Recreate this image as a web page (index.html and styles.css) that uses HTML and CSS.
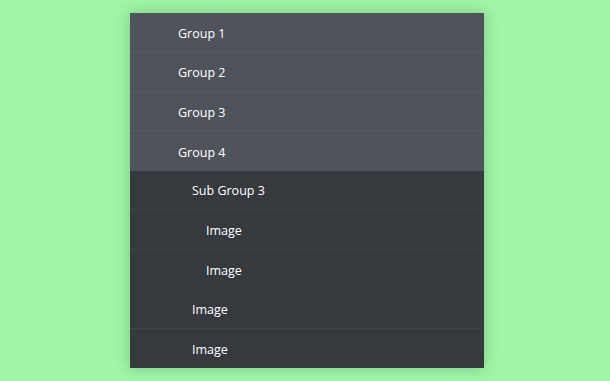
FILE: index.html
```html
<!DOCTYPE html>
<html lang="en">
  <head>
    <meta charset="UTF-8" />
    <title>Accordion Menu</title>
    <meta name="viewport" content="width=device-width, initial-scale=1" />
    <link rel="stylesheet" href="styles.css">
  </head>
  <body>
    <ul class="menu">
      <li class="group"><a href="#">Group 1</a></li>
      <li class="group"><a href="#">Group 2</a></li>
      <li class="group"><a href="#">Group 3</a></li>
      <li class="group open">
        <a href="#">Group 4</a>
        <ul class="sub">
          <li class="level-1 open">
            <a href="#">Sub Group 3</a>
            <ul class="sub">
              <li class="level-2"><a href="#">Image</a></li>
              <li class="level-2"><a href="#">Image</a></li>
            </ul>
          </li>
          <li class="level-1"><a href="#">Image</a></li>
          <li class="level-1"><a href="#">Image</a></li>
        </ul>
      </li>
    </ul>
  </body>
</html>
```

FILE: styles.css
```css
body {
  margin: 0;
  padding: 13px 0 0 130px;
  background: #a0f5a8;
  font-family: "Open Sans", "Noto Sans", sans-serif;
  height: 368px;
}

ul {
  list-style: none;
  margin: 0;
  padding: 0;
}

.menu {
  width: 354px;
  background: #4f535b;
  box-shadow: 0 0 14px rgba(0, 60, 10, 0.25);
}

.menu a {
  display: flex;
  align-items: center;
  box-sizing: border-box;
  height: 39.45px;
  padding: 2px 0 0 48px;
  color: #fff;
  font-size: 12.5px;
  text-decoration: none;
  border-bottom: 1px solid #575b63;
}

.sub {
  background: #363a3f;
}

.sub a {
  border-bottom-color: #3f4348;
}

.level-1 > a {
  padding-left: 62px;
}

.level-2 > a {
  padding-left: 76px;
}

.menu > .group:last-child > a {
  border-bottom: none;
}

.sub > li:last-child > a {
  border-bottom: none;
}

.level-1.open > a {
  border-bottom: 1px solid #3f4348;
}

.level-2:last-child > a {
  border-bottom: 1px solid #3f4348;
}
```
